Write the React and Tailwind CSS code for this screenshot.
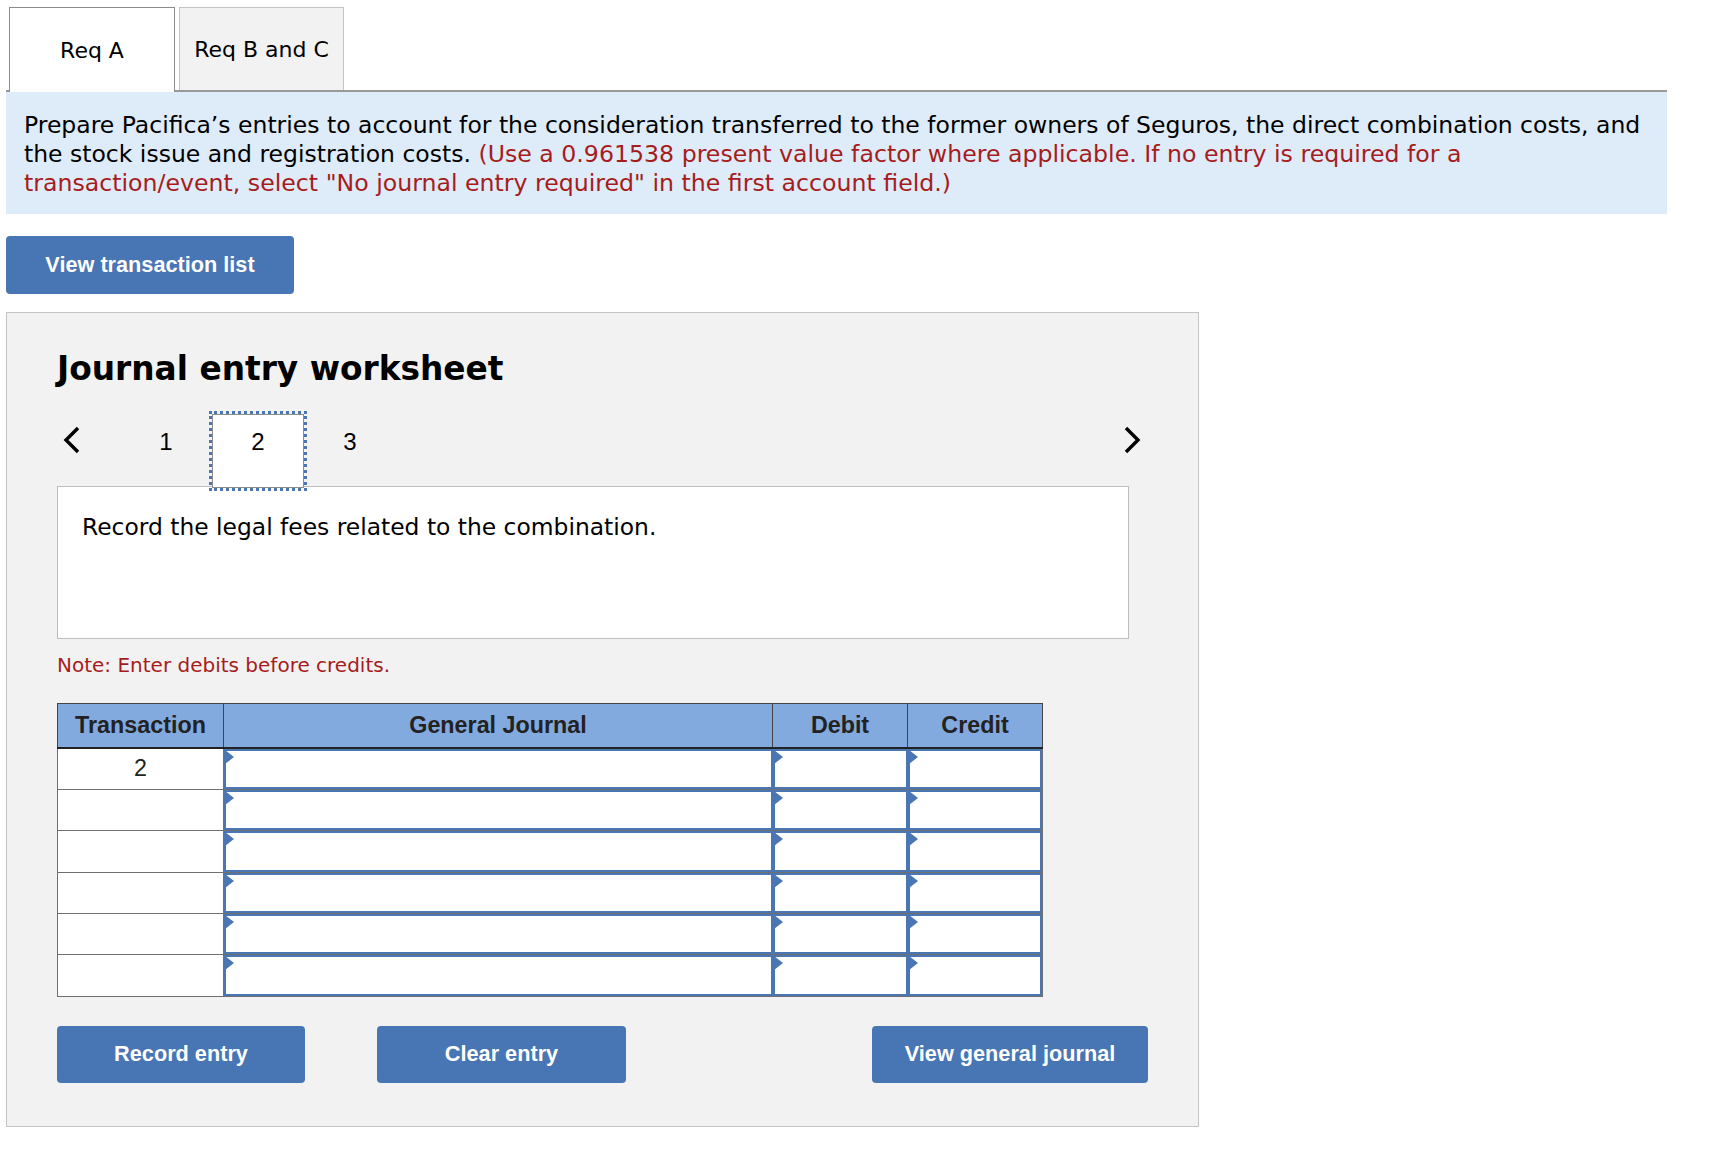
const rows = [
  { t: "2", h: "h-[42px]" },
  { t: "", h: "h-[41px]" },
  { t: "", h: "h-[42px]" },
  { t: "", h: "h-[41px]" },
  { t: "", h: "h-[41px]" },
  { t: "", h: "h-[42px]" },
];

function EntryCell({ last }) {
  return (
    <td className={`relative p-0 border-b border-[#6f6f6f] ${last ? "border-r" : ""}`}>
      <div className="absolute inset-0 border-2 border-[#4a76b4] bg-white" />
      <span className="absolute left-px top-px w-0 h-0 border-y-[7px] border-y-transparent border-l-[9px] border-l-[#4a76b4]" />
    </td>
  );
}

function Chevron({ dir }) {
  return (
    <svg width="20" height="30" viewBox="0 0 20 30" className="shrink-0">
      <path
        d={dir === "left" ? "M16 3 L4 15 L16 27" : "M4 3 L16 15 L4 27"}
        fill="none"
        stroke="#000"
        strokeWidth="3.4"
      />
    </svg>
  );
}

function Btn({ children, className }) {
  return (
    <button
      className={`bg-[#4875b4] rounded-[4px] text-white font-bold text-[21.7px] font-['Liberation_Sans',sans-serif] ${className}`}
    >
      {children}
    </button>
  );
}

export default function App() {
  return (
    <div className="w-[1712px] min-h-[1162px] bg-white pt-[7px] pl-[6px] font-['DejaVu_Sans',sans-serif] text-black">
      {/* tabs */}
      <div className="w-[1661px] h-[85px] flex items-end gap-1 pl-[3px] border-b-2 border-[#999]">
        <div className="w-[166px] h-[85px] -mb-[2px] flex items-center justify-center bg-white border border-b-0 border-[#8c8c8c] text-[22px]">
          Req A
        </div>
        <div className="w-[165px] h-[83px] flex items-center justify-center bg-[#f2f2f2] border border-b-0 border-[#c4c4c4] text-[22px]">
          Req B and C
        </div>
      </div>

      <div className="w-[1661px] h-[122px] bg-[#deebf8] pl-[18px] pr-[10px] pt-[19px] text-[23.5px] leading-[29px]">
        Prepare Pacifica’s entries to account for the consideration transferred to the former owners of Seguros, the
        direct combination costs, and the stock issue and registration costs.{" "}
        <span className="text-[#a61c1c] text-[23.65px]">
          (Use a 0.961538 present value factor where applicable. If no entry is required for a transaction/event, select
          "No journal entry required" in the first account field.)
        </span>
      </div>

      <Btn className="w-[288px] h-[58px] mt-[22px] block">View transaction list</Btn>

      {/* worksheet */}
      <div className="w-[1193px] h-[815px] mt-[18px] bg-[#f2f2f2] border border-[#c4c4c4] pl-[50px] pt-[36px]">
        <h2 className="text-[32.8px] leading-[40px] font-bold">Journal entry worksheet</h2>

        <div className="relative z-10 w-[1085px] h-[79px] mt-[22px] flex items-start text-[24px] font-['Liberation_Sans',sans-serif]">
          <div className="pt-[14px] ml-[5px]"><Chevron dir="left" /></div>
          <span className="w-[86px] ml-[41px] pt-[13px] text-center">1</span>
          <span className="w-[92px] h-[74px] mx-[3px] mt-[3px] pt-[9px] text-center bg-white border border-[#8c8c8c] outline-[3px] outline-dotted outline-[#4a76b4]">2</span>
          <span className="w-[86px] pt-[13px] text-center">3</span>
          <div className="pt-[14px] ml-auto"><Chevron dir="right" /></div>
        </div>

        <div className="w-[1072px] h-[153px] -mt-[4px] bg-white border border-[#bdbdbd] pl-[24px] pt-[26px] text-[23.4px] leading-[29px]">
          Record the legal fees related to the combination.
        </div>

        <p className="mt-[12px] text-[20px] leading-[28px] text-[#a61c1c]">Note: Enter debits before credits.</p>

        <table className="mt-[24px] w-[985px] table-fixed border-collapse font-['Liberation_Sans',sans-serif] text-[23.3px] text-[#222]">
          <colgroup>
            <col className="w-[166px]" />
            <col className="w-[549px]" />
            <col className="w-[135px]" />
            <col className="w-[135px]" />
          </colgroup>
          <thead>
            <tr className="h-[44px] bg-[#82aadf]">
              {["Transaction", "General Journal", "Debit", "Credit"].map((h) => (
                <th key={h} className="p-0 font-bold border border-[#444] border-b-2 border-b-[#222]">{h}</th>
              ))}
            </tr>
          </thead>
          <tbody>
            {rows.map((r, i) => (
              <tr key={i} className={r.h}>
                <td className="p-0 bg-white text-center border-l border-r border-b border-[#6f6f6f]">{r.t}</td>
                <EntryCell />
                <EntryCell />
                <EntryCell last />
              </tr>
            ))}
          </tbody>
        </table>

        <div className="w-[1091px] mt-[29px] flex">
          <Btn className="w-[248px] h-[57px]">Record entry</Btn>
          <Btn className="w-[249px] h-[57px] ml-[72px]">Clear entry</Btn>
          <Btn className="w-[276px] h-[57px] ml-auto">View general journal</Btn>
        </div>
      </div>
    </div>
  );
}
